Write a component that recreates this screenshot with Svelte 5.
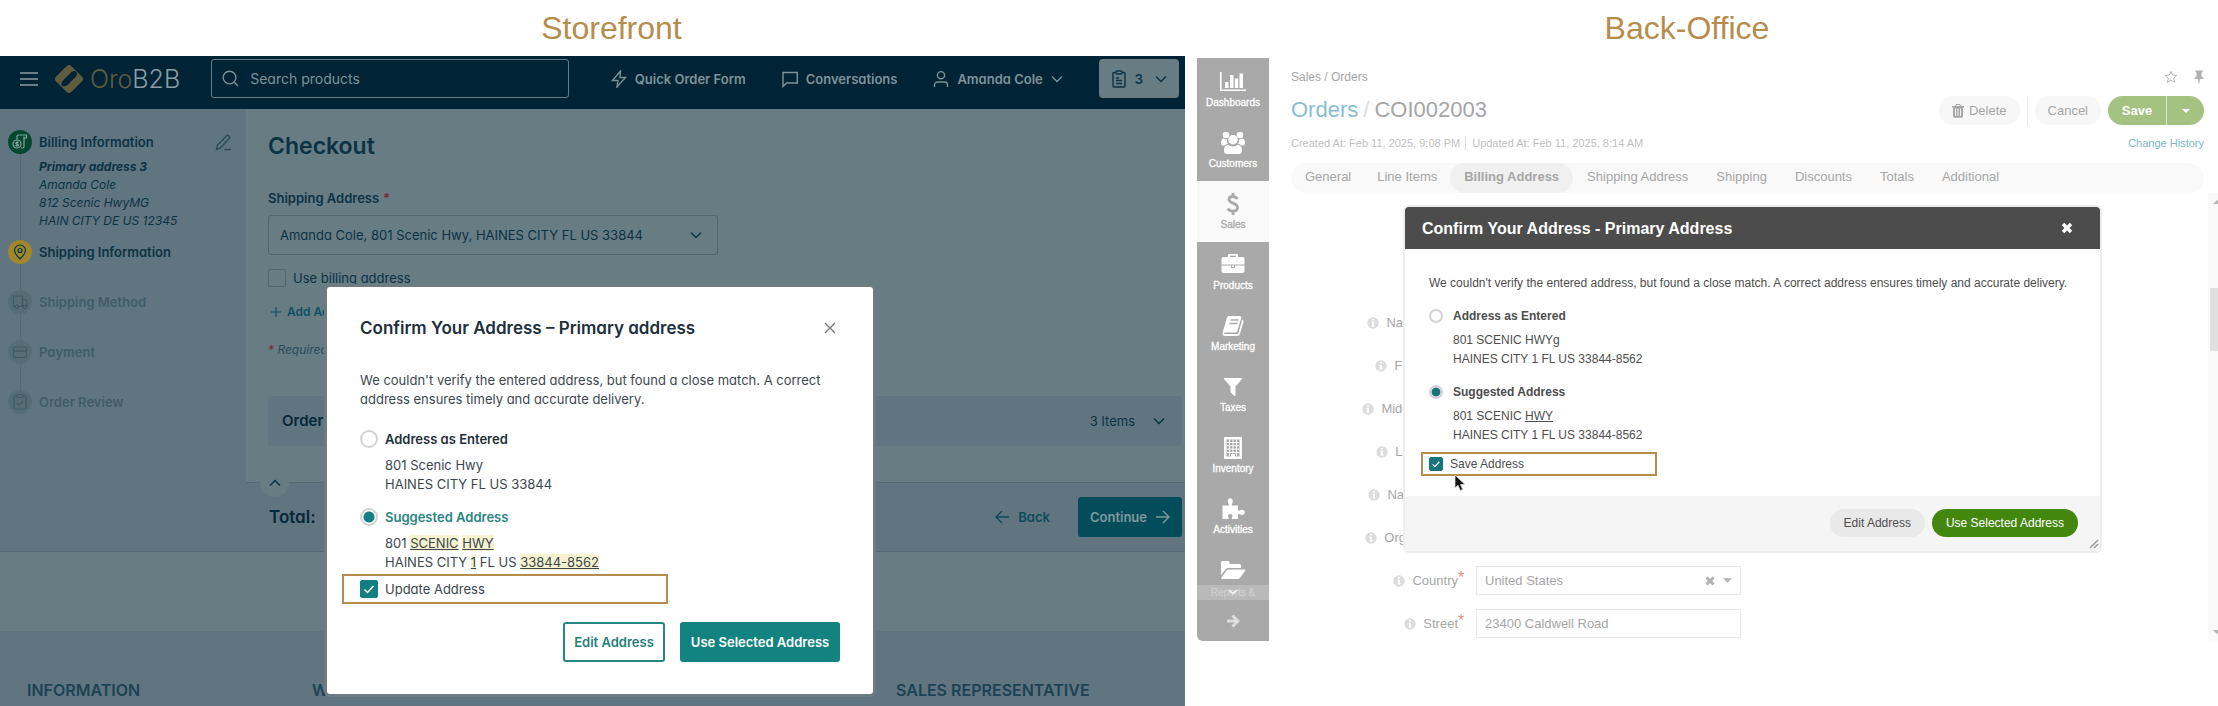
<script>
  const steps = [
    { label: 'Billing Information', state: 'done', icon: 'bill', address: true },
    { label: 'Shipping Information', state: 'current', icon: 'pin' },
    { label: 'Shipping Method', state: 'todo', icon: 'truck' },
    { label: 'Payment', state: 'todo', icon: 'card' },
    { label: 'Order Review', state: 'todo', icon: 'review' }
  ];
  const menu = [
    { label: 'Dashboards', icon: 'chart' },
    { label: 'Customers', icon: 'users' },
    { label: 'Sales', icon: 'dollar', active: true },
    { label: 'Products', icon: 'briefcase' },
    { label: 'Marketing', icon: 'book' },
    { label: 'Taxes', icon: 'filter' },
    { label: 'Inventory', icon: 'building' },
    { label: 'Activities', icon: 'puzzle' }
  ];
  const tabs = ['General', 'Line Items', 'Billing Address', 'Shipping Address', 'Shipping', 'Discounts', 'Totals', 'Additional'];
  const fields = ['Name Prefix', 'First Name', 'Middle Name', 'Last Name', 'Name Suffix', 'Organization'];
  let storeChoice = $state('suggested');
  let officeChoice = $state('suggested');
  let updateAddress = $state(true);
  let saveAddress = $state(true);
</script>

{#snippet chevron(up)}
  <svg class="chev" viewBox="0 0 12 8" aria-hidden="true"><path d={up ? 'M1 6.5 6 1.5l5 5' : 'M1 1.5l5 5 5-5'} /></svg>
{/snippet}

{#snippet info()}
  <svg class="info" viewBox="0 0 12 12" aria-hidden="true">
    <circle cx="6" cy="6" r="5.7" fill="#dcdcdc" />
    <path d="M5 2h2v1.6H5zM4.3 4.8H7v3.6h.8v1.2H4.3V8.4h.8V6h-.8z" fill="#fff" />
  </svg>
{/snippet}

{#snippet stepIcon(name)}
  <svg viewBox="0 0 24 24" aria-hidden="true">
    {#if name === 'bill'}
      <path d="M9 9.500V6.500a1.500 1.500 0 0 1 1.500-1.500H18.500v3H16v8.500a1.500 1.500 0 0 1-1.500 1.500H13M16 8V6.500" />
      <circle cx="9" cy="14" r="4" />
      <path d="M10.500 12.700c-.5-.6-2.800-.8-2.800.4s2.800.6 2.800 1.900-2.400 1-3 .2M9 11.300v5.400" />
    {:else if name === 'pin'}
      <path d="M12 19c-3.500-3.500-5.500-5.800-5.500-8.500a5.500 5.500 0 0 1 11 0c0 2.700-2 5-5.500 8.500z" /><circle cx="12" cy="10.500" r="2" />
    {:else if name === 'truck'}
      <path d="M7 16.500H5.500V6h9v10.500H10.500M14.500 9.500h2.800l1.700 2.500v4.500h-1M14.500 16.500H15" /><circle cx="8.700" cy="16.700" r="1.600" /><circle cx="16.500" cy="16.700" r="1.600" />
    {:else if name === 'card'}
      <rect x="5.500" y="7" width="13" height="10.500" rx="1.500" /><path d="M5.500 11h13" />
    {:else}
      <path d="M9 6H7.500A1.500 1.500 0 0 0 6 7.500v10A1.500 1.500 0 0 0 7.500 19h9a1.500 1.500 0 0 0 1.500-1.500v-10A1.500 1.500 0 0 0 16.500 6H15" /><rect x="9" y="4.500" width="6" height="3" rx="1" /><path d="m9 13 2.200 2.200L15 11" />
    {/if}
  </svg>
{/snippet}

{#snippet menuIcon(name)}
  <svg class="menu-icon" viewBox="0 0 26 24" aria-hidden="true">
    {#if name === 'chart'}
      <path d="M0 2h1.600v17.400H26V21H0zM5 12h3.500v6H5zM10 5h3.500v13H10zM14.800 8.500h3.500V18h-3.500zM19.500 3.500H23V18h-3.500z" />
    {:else if name === 'users'}
      <circle cx="6" cy="4" r="3.300" /><circle cx="20" cy="4" r="3.300" />
      <path d="M1 12c0-3 1.200-4.500 3-4.500 1 .6 2 .8 3 .7-.4 2 .2 3.800 1.200 4.900-1.400 0-2.400.4-3.200 1.400H3.500C2 14.500 1 14 1 12zM25 12c0-3-1.200-4.500-3-4.500-1 .6-2 .8-3 .7.4 2-.2 3.800-1.200 4.900 1.400 0 2.400.4 3.200 1.400h1.500c1.500 0 2.500-.5 2.500-2.500z" />
      <circle cx="13" cy="8.700" r="4.700" />
      <path d="M4 19.500c0-3.200 1.500-5.500 4.300-5.500 2.700 1.900 6.700 1.900 9.400 0 2.800 0 4.300 2.300 4.300 5.500 0 2.500-1.200 3.500-3 3.500H7c-1.800 0-3-1-3-3.500z" />
    {:else if name === 'dollar'}
      <path d="M17.600 6.800C16 5 14.500 4.500 12.800 4.500c-2.200 0-3.800 1.100-3.800 3 0 4.600 8.500 2.600 8.500 8 0 2.200-1.800 3.600-4.500 3.600-2 0-4-.8-5.300-2.500M13 1v3.500M13 19v4" class="stroked" />
    {:else if name === 'briefcase'}
      <path fill-rule="evenodd" d="M8 4V2.300C8 1.500 8.600 1 9.400 1h7.200c.8 0 1.400.5 1.400 1.300V4h4.500c1.200 0 2 .8 2 2v5.500h-23V6c0-1.200.8-2 2-2zm2 0h6V2.800h-6zM1.500 12.500H11V15h4v-2.500h9.500V18c0 1.200-.8 2-2 2h-19c-1.200 0-2-.8-2-2zM12 12.500h2V14h-2z" />
    {:else if name === 'book'}
      <path d="M8.800 2h11c1.300 0 1.800.9 1.500 2l-4 13c-.3 1-1 1.600-2 1.600H5c-1.200 0-1.600 1.400-.2 1.400H17c.9 0 1.300-.4 1.600-1.200L22.200 5.500c1.200.6 1.600 1.500 1.300 2.500L19.800 20.300c-.4 1.200-1.200 1.700-2.300 1.700H5C3 22 2 20 2.700 18L7 3.500C7.300 2.600 7.900 2 8.800 2z" />
      <path d="M10.500 6h8M9.500 9.500h8" stroke="#a9a9a9" stroke-width="1.400" />
    {:else if name === 'filter'}
      <path d="M4.500 3h17c.6 0 .7.700.3 1.200L15.500 11.500V20.500c0 .6-.6.800-1 .4l-3.500-3.200c-.3-.3-.5-.6-.5-1v-5.200L4.200 4.200C3.800 3.700 3.900 3 4.500 3z" />
    {:else if name === 'building'}
      <path fill-rule="evenodd" d="M5 1h16c.6 0 1 .4 1 1v20c0 .6-.4 1-1 1H5c-.6 0-1-.4-1-1V2c0-.6.400-1 1-1zM6.500 3.500v17H11V18h4v2.500h4.500v-17z" />
      <path d="M9.500 3.500v17M13 3.500v14M16.500 3.500v17M6.500 6.500h13M6.500 9.800h13M6.500 13.100h13M6.500 16.400h13" class="grid" />
    {:else if name === 'puzzle'}
      <path d="M2.500 8.500h6.300c.4-.6 0-1.500-.5-2.300C7 4 8 1.200 10.200 1.200s3.300 2.600 2.100 5c-.4.900-.7 1.700-.3 2.300h6v5c.8.500 1.600.2 2.400-.2 2.300-1.100 4.300 0 4.300 2.200s-2.200 3.200-4.300 2c-.9-.5-1.700-.7-2.400-.2V22h-6c-.5-.7 0-1.500.3-2.200.6-1.500-.4-2.800-2-2.800s-2.700 1.300-2 2.800c.3.700.6 1.500.1 2.200H2.500z" />
    {:else}
      <path d="M1 17V4.500C1 3.500 1.700 3 2.500 3H8c1 0 1.500.7 1.500 1.500V6h10c1 0 1.500.6 1.500 1.500V10H8.500c-1.300 0-2.200.5-3 1.500zM8.500 11.500h16c.9 0 1.200.6.700 1.300l-5 6.700c-.7 1-1.500 1.500-2.700 1.500H2.200c-1 0-1.200-.7-.7-1.400l5-6.800c.6-.8 1.200-1.300 2-1.300z" />
    {/if}
  </svg>
{/snippet}

<div class="page">
  <section class="column">
    <h1 class="heading store-heading">Storefront</h1>
    <div class="store">
      <header class="topbar">
        <button class="burger" aria-label="Menu"><svg viewBox="0 0 18 14"><path d="M0 1h18M0 7h18M0 13h18" /></svg></button>
        <a class="logo" href="#home">
          <svg viewBox="0 0 28 28" aria-hidden="true">
            <path fill-rule="evenodd" d="M11.500 1.200a3.500 3.500 0 0 1 5 0l10.300 10.300a3.500 3.500 0 0 1 0 5L16.500 26.800a3.500 3.500 0 0 1-5 0L1.200 16.500a3.500 3.500 0 0 1 0-5zM8 15.500L16 7.500C17.500 6 20 5.500 21.200 6.800C22.500 8 22 10.500 20.500 12L12.500 20C11 21.500 8.300 22 7 20.700C5.800 19.500 6.500 17 8 15.500z" />
          </svg>
          <span class="brand"><span class="oro">Oro</span>B2B</span>
        </a>
        <label class="search">
          <svg viewBox="0 0 18 18" aria-hidden="true"><circle cx="8" cy="8" r="6.700" /><path d="m13 13 4 4" /></svg>
          <input type="search" placeholder="Search products" aria-label="Search products" />
        </label>
        <nav class="top-links">
          <a href="#quick"><svg viewBox="0 0 16 18"><path d="M9.500 1 1.500 10.500H7L6 17l8.500-9.500H9z" /></svg>Quick Order Form</a>
          <a href="#conv"><svg viewBox="0 0 16 18"><path d="M1 2.500h14.300v10.500H4.500L1 16.500z" /></svg>Conversations</a>
          <a href="#user"><svg viewBox="0 0 16 18"><circle cx="8" cy="5.200" r="3.600" /><path d="M1.500 17v-2a3 3 0 0 1 3-3h7a3 3 0 0 1 3 3v2" /></svg>Amanda Cole {@render chevron(false)}</a>
          <button class="cart"><svg viewBox="0 0 16 18"><path d="M5 2.500H3a1 1 0 0 0-1 1V16a1 1 0 0 0 1 1h10a1 1 0 0 0 1-1V3.500a1 1 0 0 0-1-1h-2" /><rect x="5" y="1" width="6" height="3" rx="1" /><path d="M5 8h3M5 10.500h6M5 13.500h6" /></svg>3 {@render chevron(false)}</button>
        </nav>
      </header>

      <div class="checkout">
        <aside class="steps">
          <ol>
            {#each steps as step}
              <li class={step.state}>
                <div class="rail"><span class="dot">{@render stepIcon(step.icon)}</span><span class="line"></span></div>
                <div class="step-text">
                  <div class="step-name">{step.label}</div>
                  {#if step.address}
                    <address><b>Primary address 3</b><br />Amanda Cole<br />812 Scenic HwyMG<br />HAIN CITY DE US 12345</address>
                  {/if}
                </div>
                {#if step.address}
                  <button class="edit" aria-label="Edit billing information"><svg viewBox="0 0 17 17"><path d="M1.500 15.500 2.500 11 11.500 2a1.800 1.800 0 0 1 2.600 2.600L5.500 14zM9.500 15.500H16" /></svg></button>
                {/if}
              </li>
            {/each}
          </ol>
        </aside>

        <main class="content">
          <div class="form">
            <h2>Checkout</h2>
            <label class="field-label" for="ship-address">Shipping Address <i>*</i></label>
            <div class="select-box">
              <select id="ship-address"><option>Amanda Cole, 801 Scenic Hwy, HAINES CITY FL US 33844</option></select>
              {@render chevron(false)}
            </div>
            <label class="billing"><input type="checkbox" />Use billing address</label>
            <a class="add" href="#add"><svg viewBox="0 0 12 12"><path d="M6 0v12M0 6h12" /></svg>Add Address</a>
            <p class="required"><i>*</i> Required</p>
            <div class="order"><b>Order</b><span>3 Items {@render chevron(false)}</span></div>
          </div>
          <div class="total">
            <button class="collapse" aria-label="Collapse totals">{@render chevron(true)}</button>
            <strong>Total:</strong>
            <a class="back" href="#back"><svg viewBox="0 0 14 14"><path d="M14 7H1M7 1 1 7l6 6" /></svg>Back</a>
            <button class="continue">Continue<svg viewBox="0 0 14 14"><path d="M0 7h13M7 1l6 6-6 6" /></svg></button>
          </div>
        </main>
      </div>
      <footer class="store-footer"><span>INFORMATION</span><span>W</span><span>SALES REPRESENTATIVE</span></footer>

      <div class="store-modal" role="dialog" aria-labelledby="store-title">
        <div class="store-modal-head">
          <h2 id="store-title">Confirm Your Address – Primary address</h2>
          <button aria-label="Close"><svg viewBox="0 0 12 12"><path d="m1 1 10 10M11 1 1 11" /></svg></button>
        </div>
        <p>We couldn't verify the entered address, but found a close match. A correct address ensures timely and accurate delivery.</p>
        <label class="choice"><input type="radio" value="entered" bind:group={storeChoice} />Address as Entered</label>
        <div class="lines">801 Scenic Hwy<br />HAINES CITY FL US 33844</div>
        <label class="choice suggested"><input type="radio" value="suggested" bind:group={storeChoice} />Suggested Address</label>
        <div class="lines">801 <mark>SCENIC</mark> <mark>HWY</mark><br />HAINES CITY <mark>1</mark> FL US <mark>33844-8562</mark></div>
        <label class="callout"><input type="checkbox" bind:checked={updateAddress} />Update Address</label>
        <div class="actions"><button class="outline">Edit Address</button><button class="solid">Use Selected Address</button></div>
      </div>
    </div>
  </section>

  <section class="column">
    <h1 class="heading office-heading">Back-Office</h1>
    <div class="office">
      <nav class="side">
        {#each menu as item}
          <a href="#{item.icon}" class:active={item.active}>{@render menuIcon(item.icon)}<span>{item.label}</span></a>
        {/each}
        <a class="reports" href="#reports">{@render menuIcon('folder')}<span>Reports &amp;</span><svg class="more" viewBox="0 0 10 6"><path d="m1 1 4 3.500L9 1" /></svg></a>
        <button class="expand" aria-label="Expand menu"><svg viewBox="0 0 14 14"><path d="M1 7h11M6.500 1.500 12 7l-5.500 5.500" /></svg></button>
      </nav>
      <div class="office-main">
        <div class="office-head">
          <div class="crumbs"><span>Sales / Orders</span>
            <span class="tools">
              <svg viewBox="0 0 14 14"><path d="m7 1.300 1.700 3.800 4 .4-3 2.800.9 4.100L7 10.300l-3.600 2.100.9-4.100-3-2.800 4-.4z" fill="none" stroke="#b5b5b5" /></svg>
              <svg viewBox="0 0 14 14"><path d="M3.500.5h7V2l-1 .5v4c1.300.5 2 1.500 2 2.500H8l-.6 4.500h-.8L6 9H2.500c0-1 .7-2 2-2.500v-4l-1-.5z" fill="#b0b0b0" /></svg>
            </span>
          </div>
          <div class="title-row">
            <h2><a href="#orders">Orders</a><span>/</span>COI002003</h2>
            <button class="pill"><svg viewBox="0 0 12 14"><path fill-rule="evenodd" d="M4 0h4l1 2h3v1.500h-1V12c0 1-.6 1.700-1.500 1.700h-7C1.600 13.700 1 13 1 12V3.500H0V2h3zm.6 1-.4 1h3.600l-.4-1zM3 4.500V12h1V4.500zm2.500 0V12h1V4.500zM8 4.500V12h1V4.500z" /></svg>Delete</button>
            <span class="rule"></span>
            <button class="pill">Cancel</button>
            <span class="save"><button>Save</button><button class="drop" aria-label="More save options"><svg viewBox="0 0 10 6"><path d="M1 1h8L5 5z" /></svg></button></span>
          </div>
          <div class="meta"><span>Created At: Feb 11, 2025, 9:08 PM</span><span class="updated">Updated At: Feb 11, 2025, 8:14 AM</span><a href="#history">Change History</a></div>
          <div class="tabs">
            {#each tabs as tab}<a href="#tab" class:current={tab === 'Billing Address'}>{tab}</a>{/each}
          </div>
        </div>
        <div class="scroller">
          <div class="fields">
            {#each fields as field, i}
              <div class="row"><label for="f{i}">{@render info()}{field}</label><i></i><input id="f{i}" type="text" /></div>
            {/each}
            <div class="row"><label for="country">{@render info()}Country</label><i>*</i>
              <div class="country"><select id="country"><option>United States</option></select>
                <svg class="clear" viewBox="0 0 10 10"><path d="m1.500 1.500 7 7M8.500 1.500l-7 7" /></svg><svg class="caret" viewBox="0 0 10 6"><path d="M0 0h10L5 5z" /></svg></div>
            </div>
            <div class="row"><label for="street">{@render info()}Street</label><i>*</i><input id="street" type="text" value="23400 Caldwell Road" /></div>
          </div>
          <div class="bar" aria-hidden="true"><span class="up"></span><span class="thumb"></span><span class="down"></span></div>
        </div>
      </div>

      <div class="office-modal" role="dialog" aria-labelledby="office-title">
        <div class="office-modal-head"><h2 id="office-title">Confirm Your Address - Primary Address</h2>
          <button aria-label="Close"><svg viewBox="0 0 12 12"><path d="m2 2 8 8M10 2l-8 8" /></svg></button></div>
        <div class="office-modal-body">
          <p>We couldn't verify the entered address, but found a close match. A correct address ensures timely and accurate delivery.</p>
          <label class="choice"><input type="radio" value="entered" bind:group={officeChoice} />Address as Entered</label>
          <div class="lines">801 SCENIC HWYg<br />HAINES CITY 1 FL US 33844-8562</div>
          <label class="choice"><input type="radio" value="suggested" bind:group={officeChoice} />Suggested Address</label>
          <div class="lines">801 SCENIC <u>HWY</u><br />HAINES CITY 1 FL US 33844-8562</div>
          <label class="callout"><input type="checkbox" bind:checked={saveAddress} />Save Address</label>
        </div>
        <div class="office-modal-foot"><button>Edit Address</button><button class="primary">Use Selected Address</button></div>
        <svg class="grip" viewBox="0 0 10 10"><path d="m1 9 8-8M5 9l4-4" /></svg>
        <svg class="cursor" viewBox="0 0 12 18"><path d="M1 1v13l3-2.800 2.300 5.300 2.400-1L6.500 10.500H11z" fill="#111" stroke="#ddd" stroke-width=".8" /></svg>
      </div>
    </div>
  </section>
</div>

<style>
  :global(body) { margin: 0; background: #fff; }
  .page, .page :global(*) { box-sizing: border-box; }
  .page { display: grid; grid-template-columns: 1185fr 1021fr; column-gap: 12px; overflow: hidden; }
  .column { min-width: 0; }
  h1, h2, p, ol { margin: 0; padding: 0; }
  a { color: inherit; text-decoration: none; }
  button { border: 0; background: none; padding: 0; font: inherit; color: inherit; cursor: pointer; }
  input, select { font: inherit; color: inherit; }
  svg { display: block; flex: none; fill: none; }
  .heading { height: 56px; font: 400 32px/56px "Liberation Sans", Arial, sans-serif; color: #b68d4c; text-align: center; }
  .store-heading { padding-left: 38px; }
  .office-heading { padding-right: 41px; }

  /* Storefront */
  .store { position: relative; background: #677c83; color: #0b3346; font: 400 14px/18px Inter, "Open Sans", sans-serif; font-feature-settings: "cv11"; }
  .store svg { stroke: currentColor; stroke-width: 1.4; }
  .chev { width: 12px; height: 8px; }
  .topbar { display: flex; align-items: center; height: 53px; padding: 3px 6px 11px 20px; background: #002435; color: #7e9299; }
  .burger svg { width: 18px; height: 14px; stroke: #8b9ca4; stroke-width: 1.500; }
  .logo { display: flex; align-items: center; gap: 7px; margin: 0 31px 0 17px; }
  .store .logo svg { width: 28px; height: 28px; stroke: none; fill: #605c40; }
  .brand { font: 300 25px/28px Inter, sans-serif; color: #8b9ca4; }
  .oro { color: #605c40; }
  .search { display: flex; align-items: center; gap: 11px; flex: 0 1 358px; height: 39px; padding: 0 10px; border: 1px solid #667c85; border-radius: 3px; }
  .search svg { width: 17px; height: 17px; }
  .search input { flex: 1; min-width: 0; border: 0; outline: 0; padding: 0; background: none; }
  .search input::placeholder { color: #7e9299; opacity: 1; }
  .top-links { display: flex; align-items: center; gap: 36px; margin-left: auto; font-weight: 600; font-size: 13px; }
  .top-links a, .cart { display: flex; align-items: center; gap: 8px; white-space: nowrap; }
  .top-links a svg:first-child, .cart svg:first-child { width: 16px; height: 18px; }
  .cart { height: 39px; padding: 0 12px; border-radius: 4px; background: #677c83; color: #0b3346; }
  .cart :global(.chev) { margin-left: 4px; }

  .checkout { display: flex; border-bottom: 1px solid #546b77; }
  .steps { flex: none; width: 246px; padding: 21px 14px 0 8px; background: #60757f; }
  .steps ol { list-style: none; }
  .steps li { display: flex; gap: 7px; min-height: 50px; }
  .steps li:first-child { min-height: 110px; }
  .rail { display: flex; flex-direction: column; align-items: center; }
  .line { flex: 1; width: 1px; background: #546b74; }
  li:last-child .line { display: none; }
  .dot { display: flex; width: 24px; height: 24px; border-radius: 50%; background: #566d75; color: #3f5a66; }
  .dot svg { width: 24px; height: 24px; stroke-width: 1.2; }
  .done .dot { background: #00492f; color: #8aa29b; }
  .current .dot { background: #a0872c; color: #0b3346; }
  .step-text { flex: 1; white-space: nowrap; }
  .step-name { font-weight: 600; font-size: 13px; line-height: 24px; }
  .todo .step-name { color: #405c69; }
  address { margin-top: 4px; font-size: 12px; }
  .edit { align-self: flex-start; margin-top: 4px; color: #2c4c5b; }
  .edit svg { width: 17px; height: 17px; }
  .content { flex: 1; min-width: 0; }
  .form { padding: 22px 3px 36px 22px; }
  .form h2 { font-size: 23px; line-height: 30px; font-weight: 600; }
  .field-label { display: block; margin-top: 27px; font-weight: 600; font-size: 13px; line-height: 20px; }
  .field-label i, .required i { color: #7d2637; }
  .select-box { display: flex; align-items: center; width: 450px; max-width: 100%; height: 40px; margin-top: 7px; padding-right: 15px; border: 1px solid #4e6771; border-radius: 3px; font-size: 13px; }
  .select-box select { flex: 1; min-width: 0; height: 38px; border: 0; padding: 0 0 0 11px; background: none; appearance: none; }
  .billing { display: flex; align-items: center; gap: 7px; height: 20px; margin-top: 13px; font-size: 13px; }
  .billing input { appearance: none; width: 18px; height: 18px; margin: 0; border: 1px solid #4e6771; border-radius: 2px; }
  .add { display: flex; align-items: center; gap: 6px; height: 20px; margin: 14px 0 0 3px; font-size: 12px; font-weight: 600; color: #0c5163; }
  .add svg { width: 10px; height: 10px; }
  .required { margin-top: 18px; line-height: 20px; font-size: 12px; font-style: italic; color: #2c4b5a; }
  .order { display: flex; justify-content: space-between; align-items: center; height: 50px; margin-top: 36px; padding: 0 17px 0 14px; background: #60757f; border-radius: 4px; }
  .order b { font-size: 15px; font-weight: 600; color: #05283b; }
  .order span { display: flex; align-items: center; gap: 18px; font-size: 13px; }
  .total { position: relative; display: flex; align-items: center; height: 69px; padding: 0 3px 0 23px; border-top: 1px solid #546b77; background: #60757f; }
  .total strong { flex: 1; font-size: 17px; font-weight: 600; color: #05283b; }
  .collapse { position: absolute; left: 14px; top: -15px; display: grid; place-items: center; width: 29px; height: 29px; border-radius: 50%; background: #677c83; }
  .back { display: flex; align-items: center; gap: 9px; margin-right: 28px; font-weight: 600; font-size: 13px; color: #0c4c5c; }
  .back svg, .continue svg { width: 14px; height: 14px; }
  .continue { display: flex; align-items: center; gap: 9px; height: 40px; padding: 0 12px; border-radius: 3px; background: #034d5b; color: #80989f; font-weight: 600; font-size: 13px; }
  .store-footer { display: grid; grid-template-columns: 285px 584px 1fr; margin-top: 79px; padding: 48px 0 5px 27px; background: #60757f; color: #1b4355; font-size: 16px; font-weight: 600; line-height: 22px; white-space: nowrap; }

  .store-modal { position: absolute; left: 327px; top: 231px; width: 546px; padding: 29px 33px 32px; border-radius: 3px; background: #fff; box-shadow: 0 0 0 3px #6d7c81; color: #3c474f; font-size: 13px; line-height: 19px; }
  .store-modal-head { display: flex; align-items: center; justify-content: space-between; height: 24px; padding-right: 4px; }
  .store-modal-head h2 { font-size: 17px; font-weight: 600; color: #1d2f3b; }
  .store-modal-head svg { width: 12px; height: 12px; stroke: #777; }
  .store-modal p { margin-top: 31px; }
  .choice { display: flex; align-items: center; font-weight: 600; line-height: 20px; }
  .store-modal .choice { gap: 7px; margin-top: 13px; color: #1d2f3b; }
  .store-modal p + .choice { margin-top: 20px; }
  .store-modal .suggested { color: #2a8682; }
  .store-modal .lines { margin: 7px 0 0 25px; }
  input[type='radio'] { appearance: none; width: 18px; height: 18px; margin: 0; border: 2px solid #d0d4d4; border-radius: 50%; background: #fff; }
  input[type='radio']:checked { background: radial-gradient(circle, #128080 0 5px, #fff 6px); }
  mark { background: #f6f3ce; color: inherit; text-decoration: underline; }
  .callout { display: flex; align-items: center; border: 2px solid #b68d4c; }
  .store-modal .callout { gap: 7px; width: 326px; height: 30px; margin: 2px 0 0 -18px; padding-left: 16px; }
  .callout input { appearance: none; width: 18px; height: 18px; margin: 0; border-radius: 2px; border: 1px solid #128080; background: #fff; }
  .callout input:checked { background: #128080 url("data:image/svg+xml,%3Csvg xmlns='http://www.w3.org/2000/svg' viewBox='0 0 16 16'%3E%3Cpath d='M3.500 8.500l3 3 6-6.500' fill='none' stroke='white' stroke-width='1.500'/%3E%3C/svg%3E") center / 100% no-repeat; }
  .actions { display: flex; justify-content: flex-end; gap: 15px; margin-top: 18px; font-weight: 600; }
  .actions button { height: 40px; border-radius: 3px; white-space: nowrap; }
  .outline { width: 102px; border: 2px solid #2a8682; color: #1f807c; }
  .solid { width: 160px; background: #138381; color: #fff; }

  /* Back office */
  .office { position: relative; display: flex; background: #fff; margin-top: 2px; color: #a6a6a6; font: 400 13px/20px "Liberation Sans", Arial, sans-serif; }
  .side { flex: none; display: flex; flex-direction: column; width: 72px; padding-top: 1px; background: #a9a9a9; border-bottom-left-radius: 6px; color: #fff; font-size: 10px; }
  .side a { display: flex; flex-direction: column; align-items: center; height: 61px; padding-top: 11px; line-height: 18px; }
  .side a span { -webkit-text-stroke: 0.3px currentColor; }
  .menu-icon { width: 26px; height: 24px; fill: currentColor; }
  .menu-icon .stroked { fill: none; stroke: currentColor; stroke-width: 2.800; }
  .menu-icon .grid { stroke: currentColor; stroke-width: 1; }
  .side .active { background: #f9f9f9; color: #a9a9a9; }
  .side .reports { position: relative; height: 53px; }
  .side .reports span { width: 100%; text-align: center; height: 15px; line-height: 15px; margin-top: 3px; background: #b9b9b9; color: #cecece; }
  .more { position: absolute; left: 31px; bottom: 5px; width: 10px; height: 6px; stroke: #eee; stroke-width: 2; }
  .expand { display: grid; place-items: center; height: 41px; }
  .expand svg { width: 14px; height: 14px; stroke: #ddd; stroke-width: 3; }
  .office-main { flex: 1; min-width: 0; display: flex; flex-direction: column; }
  .office-head { padding: 9px 14px 0 22px; }
  .crumbs { display: flex; justify-content: space-between; font-size: 12px; }
  .tools { display: flex; align-items: center; gap: 14px; margin-right: -2px; }
  .tools svg { width: 14px; height: 14px; }
  .title-row { display: flex; align-items: center; height: 29px; margin-top: 9px; }
  .title-row h2 { display: flex; gap: 5px; flex: 1; font-size: 22px; line-height: 26px; padding-bottom: 2px; font-weight: 400; }
  .title-row h2 a { color: #86bfd1; }
  .title-row h2 span { color: #ddd; }
  .pill { display: flex; align-items: center; gap: 5px; height: 29px; padding: 0 13px; border-radius: 15px; background: #f7f7f7; }
  .pill svg { width: 12px; height: 14px; fill: #a6a6a6; }
  .rule { width: 1px; height: 29px; margin: 0 7px; background: #ececec; }
  .save { display: flex; height: 29px; margin-left: 7px; border-radius: 15px; overflow: hidden; background: #a4c382; color: #fff; font-weight: 700; }
  .save button { width: 58px; }
  .save .drop { display: grid; place-items: center; width: 38px; border-left: 1px solid #dbe7cd; }
  .save svg { width: 10px; height: 6px; fill: #fff; }
  .meta { display: flex; height: 14px; margin-top: 11px; font-size: 11px; line-height: 14px; color: #bfbfbf; }
  .updated { margin-left: 5px; padding-left: 6px; border-left: 1px solid #ddd; }
  .meta a { margin-left: auto; color: #7ab9cc; }
  .tabs { display: flex; height: 30px; margin-top: 13px; padding-left: 1px; border-radius: 15px; background: #f9f9f9; line-height: 28px; white-space: nowrap; }
  .tabs a { padding: 0 13px; border-radius: 15px; }
  .tabs a:nth-child(n + 3) { padding: 0 14px; }
  .tabs .current { background: #f0f0f0; font-weight: 700; }
  .scroller { display: flex; justify-content: space-between; }
  .fields { display: flex; flex-direction: column; gap: 14px; padding: 115px 0 3px; }
  .row { display: grid; grid-template-columns: 189px 18px 265px; height: 29px; }
  .row label { display: flex; align-items: center; justify-content: flex-end; gap: 7px; }
  .info { width: 12px; height: 12px; }
  .row > i { font-style: normal; font-size: 16px; line-height: 24px; color: #dd9180; }
  .row > input, .country { width: 265px; height: 29px; padding: 0 8px; border: 1px solid #e8e8e8; background: #fff; outline: 0; }
  .country { display: flex; align-items: center; gap: 8px; }
  .country select { flex: 1; appearance: none; border: 0; padding: 0; background: none; }
  .clear { width: 10px; height: 10px; stroke: #b3b3b3; stroke-width: 3; }
  .caret { width: 9px; height: 6px; fill: #b3b3b3; }
  .bar { display: flex; flex-direction: column; align-items: flex-end; width: 10px; padding: 7px 0; background: #f9f9f9; overflow: hidden; }
  .up, .down { flex: none; margin-right: -3px; border: 4px solid transparent; }
  .up { border-top-width: 0; border-bottom-color: #b5b5b5; }
  .down { margin-top: auto; border-bottom-width: 0; border-top-color: #b5b5b5; }
  .thumb { flex: none; width: 8px; height: 63px; margin-top: 84px; background: #e0e0e0; }

  .office-modal { position: absolute; left: 208px; top: 149px; width: 695px; border-radius: 4px; background: #fff; box-shadow: 0 0 0 2px #eee; color: #4d4d4d; font-size: 12px; line-height: 19px; }
  .office-modal-head { display: flex; align-items: center; justify-content: space-between; height: 42px; padding: 0 27px 0 17px; border-radius: 4px 4px 0 0; background: #4c4c4c; color: #fff; }
  .office-modal-head h2 { font-size: 16px; }
  .office-modal-head svg { width: 12px; height: 12px; stroke: #fff; stroke-width: 3.500; }
  .office-modal-body { padding: 24px 24px 20px; }
  .office-modal-body p { line-height: 20px; }
  .office-modal .choice { gap: 10px; margin-top: 13px; }
  .office-modal .choice input { width: 14px; height: 14px; }
  .office-modal .choice input:checked { background: radial-gradient(circle, #17737e 0 4px, #fff 5px); }
  .office-modal .lines { margin: 5px 0 0 24px; }
  .office-modal .callout { gap: 7px; width: 236px; height: 24px; margin: 7px 0 0 -8px; padding-left: 6px; }
  .office-modal .callout input { width: 14px; height: 14px; }
  .office-modal .callout input:checked { background-color: #17737e; border-color: #17737e; }
  .office-modal-foot { display: flex; justify-content: flex-end; gap: 7px; padding: 13px 22px 14px; background: #f5f5f5; }
  .office-modal-foot button { height: 28px; padding: 0 14px; border-radius: 14px; background: #e9e9e9; }
  .office-modal-foot .primary { background: #44870f; color: #fff; }
  .grip { position: absolute; right: 1px; bottom: 2px; width: 10px; height: 10px; stroke: #999; stroke-width: 1.500; }
  .cursor { position: absolute; left: 49px; top: 267px; width: 12px; height: 18px; }
</style>
